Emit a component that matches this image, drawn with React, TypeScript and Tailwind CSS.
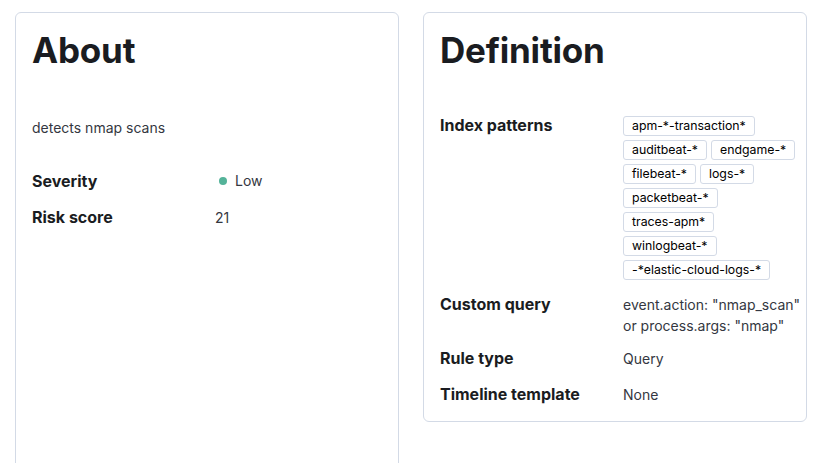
const indexPatterns = [
  "apm-*-transaction*",
  "auditbeat-*",
  "endgame-*",
  "filebeat-*",
  "logs-*",
  "packetbeat-*",
  "traces-apm*",
  "winlogbeat-*",
  "-*elastic-cloud-logs-*",
];

function Panel(props: { className?: string; children: React.ReactNode }) {
  return (
    <div
      className={
        "w-[384px] shrink-0 rounded-[6px] border border-[#d3dae6] bg-white pl-4 pr-2 pt-[17px] " +
        (props.className ?? "")
      }
    >
      {props.children}
    </div>
  );
}

function Title(props: { children: React.ReactNode }) {
  return (
    <h2 className="text-[35px] font-bold leading-[40px] tracking-[-0.2px] text-[#1a1c21]">
      {props.children}
    </h2>
  );
}

function Row(props: {
  label: string;
  className?: string;
  children: React.ReactNode;
}) {
  return (
    <div className={"flex items-start " + (props.className ?? "")}>
      <dt className="w-[183px] shrink-0 text-[16px] font-bold leading-[24px] text-[#1a1c21]">
        {props.label}
      </dt>
      <dd className="min-w-0 flex-1 text-[14px] leading-[21px] text-[#343741]">
        {props.children}
      </dd>
    </div>
  );
}

function Badge(props: { children: React.ReactNode }) {
  return (
    <span className="inline-flex h-[20px] items-center rounded-[3px] border border-[#d3dae6] bg-white px-2 text-[12.3px] leading-[18px] text-black">
      {props.children}
    </span>
  );
}

export default function App() {
  return (
    <div
      className="flex items-start gap-6 bg-white pl-[15px] pt-[12px]"
      style={{ fontFamily: "Inter, 'Noto Sans', sans-serif" }}
    >
      <Panel className="h-[480px]">
        <Title>About</Title>
        <p className="mt-[48px] text-[14px] leading-[20px] text-[#343741]">
          detects nmap scans
        </p>
        <dl className="mt-[31px]">
          <Row label="Severity">
            <span className="mt-[1px] flex items-center gap-2 pl-1">
              <span className="h-2 w-2 rounded-full bg-[#54b399]" />
              Low
            </span>
          </Row>
          <Row label="Risk score" className="mt-[12px]">
            <span className="mt-[2px] block">21</span>
          </Row>
        </dl>
      </Panel>

      <Panel className="pb-[15px]">
        <Title>Definition</Title>
        <dl className="mt-[43px]">
          <Row label="Index patterns">
            <div className="mt-[3px] flex flex-wrap gap-1">
              {indexPatterns.map((p) => (
                <Badge key={p}>{p}</Badge>
              ))}
            </div>
          </Row>
          <Row label="Custom query" className="mt-[12px]">
            <div className="mt-[2px] whitespace-nowrap">
              event.action: "nmap_scan"
              <br />
              or process.args: "nmap"
            </div>
          </Row>
          <Row label="Rule type" className="mt-[10px]">
            <span className="mt-[2px] block">Query</span>
          </Row>
          <Row label="Timeline template" className="mt-[12px]">
            <span className="mt-[2px] block">None</span>
          </Row>
        </dl>
      </Panel>
    </div>
  );
}
